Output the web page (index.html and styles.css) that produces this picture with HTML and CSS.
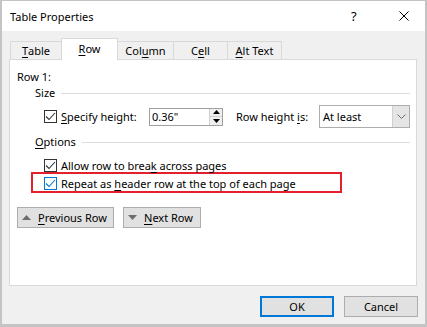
FILE: index.html
```html
<!DOCTYPE html>
<html>
<head>
  <meta charset="UTF-8">
  <title>Table Properties</title>
  <link rel="stylesheet" href="styles.css">
</head>
<body>
  <div class="window">
    <div class="titlebar">
      <span class="title">Table Properties</span>
      <span class="help">?</span>
      <span class="close">
        <svg width="10" height="10" viewBox="0 0 10 10"><path d="M0.5 0.5 L9.5 9.5 M9.5 0.5 L0.5 9.5" stroke="#000" stroke-width="1" fill="none"/></svg>
      </span>
    </div>

    <div class="body">
      <div class="tabs">
        <div class="tab tab-table"><u>T</u>able</div>
        <div class="tab tab-row active"><u>R</u>ow</div>
        <div class="tab tab-col">Col<u>u</u>mn</div>
        <div class="tab tab-cell">C<u>e</u>ll</div>
        <div class="tab tab-alt"><u>A</u>lt Text</div>
      </div>

      <div class="panel">
        <div class="row-title">Row 1:</div>

        <div class="group-head">Size<span class="rule"></span></div>
        <div class="size-row">
          <span class="check"><svg width="11" height="11" viewBox="0 0 11 11"><path d="M1 5.5 L4 8.5 L10 2" stroke="#333" stroke-width="1.1" fill="none"/></svg></span>
          <span class="label-spec"><u>S</u>pecify height:</span>
          <span class="spin">
            <span class="spin-value">0.36"</span>
            <span class="spin-btns">
              <span class="spin-up"><svg width="7" height="4" viewBox="0 0 7 4"><path d="M0 4 L3.5 0 L7 4 Z" fill="#000"/></svg></span>
              <span class="spin-down"><svg width="7" height="4" viewBox="0 0 7 4"><path d="M0 0 L3.5 4 L7 0 Z" fill="#000"/></svg></span>
            </span>
          </span>
          <span class="label-is">Row height <u>i</u>s:</span>
          <span class="select">
            <span class="select-value">At least</span>
            <span class="select-btn"><svg width="9" height="5" viewBox="0 0 9 5"><path d="M0.5 0.5 L4.5 4.5 L8.5 0.5" stroke="#6b6b6b" stroke-width="1" fill="none"/></svg></span>
          </span>
        </div>

        <div class="group-head options-head"><u>O</u>ptions<span class="rule"></span></div>
        <div class="opt-row">
          <span class="check"><svg width="11" height="11" viewBox="0 0 11 11"><path d="M1 5.5 L4 8.5 L10 2" stroke="#333" stroke-width="1.1" fill="none"/></svg></span>
          <span>Allow row to brea<u>k</u> across pages</span>
        </div>
        <div class="opt-row highlight">
          <span class="check focus"><svg width="11" height="11" viewBox="0 0 11 11"><path d="M1 5.5 L4 8.5 L10 2" stroke="#0078d7" stroke-width="1.1" fill="none"/></svg></span>
          <span>Repeat as <u>h</u>eader row at the top of each page</span>
        </div>

        <div class="nav-buttons">
          <div class="btn btn-prev">
            <svg width="9" height="5" viewBox="0 0 9 5"><path d="M0 5 L4.5 0 L9 5 Z" fill="#6d6d6d"/></svg>
            <span><u>P</u>revious Row</span>
          </div>
          <div class="btn btn-next">
            <svg width="9" height="5" viewBox="0 0 9 5"><path d="M0 0 L4.5 5 L9 0 Z" fill="#6d6d6d"/></svg>
            <span><u>N</u>ext Row</span>
          </div>
        </div>
      </div>

      <div class="footer">
        <div class="btn btn-ok">OK</div>
        <div class="btn btn-cancel">Cancel</div>
      </div>
    </div>
  </div>
</body>
</html>
```

FILE: styles.css
```css
* {
  box-sizing: border-box;
}
body {
  margin: 0;
  background: #c8c8c8;
  font-family: "Noto Sans", "Liberation Sans", sans-serif;
  font-size: 11px;
  color: #000;
}
u {
  text-decoration: underline;
  text-underline-offset: 2px;
}
.window {
  width: 427px;
  height: 327px;
  border-style: solid;
  border-color: #c4c4c4;
  border-width: 1px 2px 3px 2px;
  display: flex;
  flex-direction: column;
}
.titlebar {
  height: 30px;
  background: #fff;
  display: flex;
  align-items: center;
  font-size: 11px;
}
.title {
  margin-left: 8px;
  flex: 1;
}
.help {
  width: 12px;
  margin-right: 36px;
  font-size: 13px;
}
.close {
  display: flex;
  margin-right: 16px;
}
.body {
  flex: 1;
  background: #f0f0f0;
  display: flex;
  flex-direction: column;
}
.tabs {
  display: flex;
  align-items: flex-end;
  height: 28px;
  margin-left: 8px;
  position: relative;
  z-index: 1;
}
.tab {
  height: 18px;
  border: 1px solid #d9d9d9;
  border-bottom: none;
  background: #f0f0f0;
  display: flex;
  align-items: center;
  justify-content: center;
  margin-left: -1px;
}
.tab-table { width: 52px; margin-left: 0; }
.tab-row { width: 57px; }
.tab-col { width: 57px; }
.tab-cell { width: 55px; }
.tab-alt { width: 55px; }
.tab.active {
  height: 22px;
  background: #fff;
  margin-bottom: -1px;
  padding-bottom: 3px;
}
.panel {
  margin-left: 7px;
  width: 408px;
  height: 227px;
  background: #fff;
  border: 1px solid #d9d9d9;
  padding: 9px 6px 0 7px;
}
.row-title {
  height: 16px;
  line-height: 16px;
}
.group-head {
  height: 16px;
  line-height: 16px;
  margin-left: 18px;
  display: flex;
  align-items: center;
}
.rule {
  flex: 1;
  height: 1px;
  background: #dcdcdc;
  margin-left: 6px;
}
.options-head {
  margin-top: 6px;
}
.check {
  width: 13px;
  height: 13px;
  border: 1px solid #333;
  background: #fff;
  display: inline-flex;
  align-items: center;
  justify-content: center;
  flex-shrink: 0;
}
.check.focus {
  border-color: #0078d7;
}
.size-row {
  margin-top: 4px;
  height: 23px;
  display: flex;
  align-items: center;
  padding-left: 27px;
}
.label-spec {
  margin-left: 4px;
  width: 88px;
}
.spin {
  width: 74px;
  height: 18px;
  border: 1px solid #a0a0a0;
  display: flex;
  background: #fff;
}
.spin-value {
  flex: 1;
  padding-left: 2px;
  line-height: 16px;
}
.spin-btns {
  width: 13px;
  display: flex;
  flex-direction: column;
  border-left: 1px solid #d0d0d0;
  background: #f0f0f0;
}
.spin-up, .spin-down {
  flex: 1;
  display: flex;
  align-items: center;
  justify-content: center;
}
.spin-up {
  border-bottom: 1px solid #d0d0d0;
}
.label-is {
  margin-left: 13px;
  width: 83px;
}
.select {
  width: 91px;
  height: 23px;
  border: 1px solid #adadad;
  display: flex;
  background: #fff;
}
.select-value {
  flex: 1;
  padding-left: 3px;
  line-height: 21px;
}
.select-btn {
  width: 17px;
  background: #e5e5e5;
  border-left: 1px solid #d0d0d0;
  display: flex;
  align-items: center;
  justify-content: center;
}
.opt-row {
  height: 16px;
  display: flex;
  align-items: center;
  padding-left: 27px;
  margin-top: 7px;
  gap: 4px;
}
.opt-row.highlight {
  margin-top: -1px;
  margin-left: 14px;
  width: 311px;
  height: 21px;
  border: 2px solid #e3202c;
  padding-left: 11px;
  padding-top: 2px;
}
.nav-buttons {
  display: flex;
  gap: 9px;
  margin-top: 14px;
}
.btn {
  height: 21px;
  background: #e1e1e1;
  border: 1px solid #adadad;
  display: flex;
  align-items: center;
}
.btn-prev {
  width: 97px;
  padding-left: 4px;
  gap: 7px;
}
.btn-next {
  width: 78px;
  padding-left: 4px;
  gap: 7px;
}
.footer {
  display: flex;
  justify-content: flex-end;
  gap: 10px;
  margin-top: 10px;
  margin-right: 7px;
}
.btn-ok, .btn-cancel {
  width: 74px;
  justify-content: center;
}
.btn-ok {
  border: 2px solid #0078d7;
}
```
